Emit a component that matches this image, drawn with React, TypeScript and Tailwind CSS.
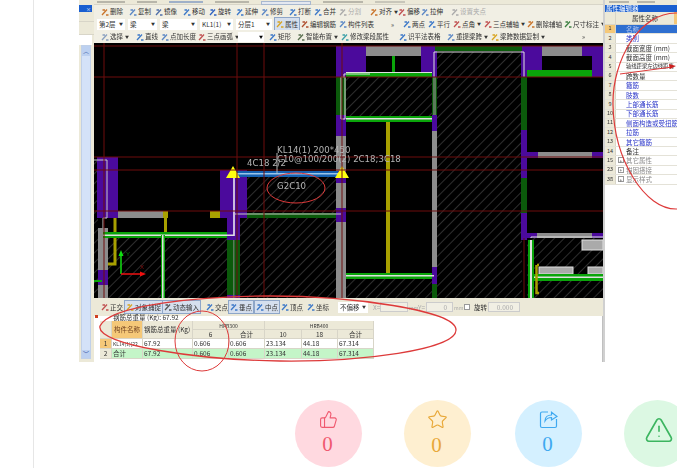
import { Star, ThumbsUp, TriangleAlert } from "lucide-react";

type Tool = { t: string; w: string; c?: string; on?: boolean; off?: boolean; arrow?: boolean };

const row1: Tool[] = [
  { t: "删除", w: "w-[28px]", c: "#c9742b" },
  { t: "复制", w: "w-[26px]", c: "#5b87c5" },
  { t: "镜像", w: "w-[28px]", c: "#4f6fa8" },
  { t: "移动", w: "w-[26px]", c: "#3c78c8" },
  { t: "旋转", w: "w-[27px]", c: "#2f62c0" },
  { t: "延伸", w: "w-[25px]", c: "#3c78c8" },
  { t: "修剪", w: "w-[28px]", c: "#5b87c5" },
  { t: "打断", w: "w-[25px]", c: "#3c78c8" },
  { t: "合并", w: "w-[25px]", c: "#3c78c8" },
  { t: "分割", w: "w-[31px]", c: "#aaaaaa", off: true },
  { t: "对齐", w: "w-[28px]", c: "#c9742b", arrow: true },
  { t: "偏移", w: "w-[23px]", c: "#c05050" },
  { t: "拉伸", w: "w-[30px]", c: "#5b87c5" },
  { t: "设置夹点", w: "w-[40px]", c: "#aaaaaa", off: true },
];

const row2b: Tool[] = [
  { t: "属性", w: "w-[25px]", c: "#d9a520", on: true },
  { t: "编辑钢筋", w: "w-[38px]", c: "#b05030" },
  { t: "构件列表", w: "w-[51px]", c: "#5b87c5" },
];

const row2c: Tool[] = [
  { t: "两点", w: "w-[25px]", c: "#3c78c8" },
  { t: "平行", w: "w-[25px]", c: "#3c78c8" },
  { t: "点角", w: "w-[31px]", c: "#c05050", arrow: true },
  { t: "三点辅轴", w: "w-[43px]", c: "#c05050", arrow: true },
  { t: "删除辅轴", w: "w-[37px]", c: "#c9742b" },
  { t: "尺寸标注", w: "w-[42px]", c: "#3c8040", arrow: true },
];

const row3a: Tool[] = [
  { t: "选择", w: "w-[35px]", c: "#8aa0c0", arrow: true },
  { t: "直线", w: "w-[25px]", c: "#3c78c8" },
  { t: "点加长度", w: "w-[37px]", c: "#5b87c5" },
  { t: "三点画弧", w: "w-[41px]", c: "#c05050", arrow: true },
];

const row3b: Tool[] = [
  { t: "矩形", w: "w-[28px]", c: "#3c78c8" },
  { t: "智能布置", w: "w-[44px]", c: "#5a7050", arrow: true },
  { t: "修改梁段属性", w: "w-[58px]", c: "#3ca0a8" },
  { t: "识平法表格", w: "w-[48px]", c: "#3c78c8" },
  { t: "重提梁跨", w: "w-[44px]", c: "#5b87c5", arrow: true },
  { t: "梁跨数据复制", w: "w-[60px]", c: "#d9a520", arrow: true },
];

const snaps: Tool[] = [
  { t: "正交", w: "w-[25px]", c: "#c05050" },
  { t: "对象捕捉", w: "w-[38px]", c: "#d9a520", on: true },
  { t: "动态输入", w: "w-[42px]", c: "#555555", on: true },
  { t: "交点", w: "w-[24px]", c: "#3c78c8" },
  { t: "垂点", w: "w-[26px]", c: "#3c78c8", on: true },
  { t: "中点", w: "w-[25px]", c: "#3c78c8", on: true },
  { t: "顶点", w: "w-[26px]", c: "#3c78c8" },
  { t: "坐标", w: "w-[32px]", c: "#3c78c8" },
];

const props = [
  { n: "1", t: "名称", k: "sel" },
  { n: "2", t: "类别", k: "blue" },
  { n: "3", t: "截面宽度 (mm)", k: "" },
  { n: "4", t: "截面高度 (mm)", k: "" },
  { n: "5", t: "轴线距梁左边线距离", k: "long" },
  { n: "6", t: "跨数量", k: "" },
  { n: "7", t: "箍筋", k: "blue" },
  { n: "8", t: "肢数", k: "blue" },
  { n: "9", t: "上部通长筋", k: "blue" },
  { n: "10", t: "下部通长筋", k: "blue" },
  { n: "11", t: "侧面构造或受扭筋", k: "blue" },
  { n: "12", t: "拉筋", k: "blue" },
  { n: "13", t: "其它箍筋", k: "blue" },
  { n: "14", t: "备注", k: "" },
  { n: "15", t: "其它属性", k: "plus" },
  { n: "23", t: "锚固搭接", k: "plus" },
  { n: "38", t: "显示样式", k: "plus" },
];

function ToolItem({ tool }: { tool: Tool }) {
  return (
    <div className={`${tool.w} flex items-center shrink-0 h-[12px]`}>
      <div
        className={`flex items-center gap-[1px] h-[12px] px-[1px] ${
          tool.on ? "bg-[#d5dfee] outline outline-[#8ea6c8]" : ""
        }`}
      >
        <svg width="8" height="8" viewBox="0 0 8 8" className="shrink-0">
          <path d="M1 7 L6 1.5 M1.5 2 H4 M5 7 H7.5" stroke={tool.c} strokeWidth="1.3" fill="none" />
        </svg>
        <span className={`whitespace-nowrap ${tool.off ? "text-[#aaa]" : "text-[#333]"}`}>{tool.t}</span>
        {tool.arrow && <span className="text-[4px] text-[#333] ml-[1px]">▼</span>}
      </div>
    </div>
  );
}

function Select({ t, w }: { t: string; w: string }) {
  return (
    <div className={`${w} h-[11px] shrink-0 mr-[3px] bg-white flex items-center justify-between pr-[2px] pl-[2px] text-[#333]`}>
      <span className="whitespace-nowrap">{t}</span>
      <span className="text-[4px]">▼</span>
    </div>
  );
}

function Cell({ t, cls }: { t: string; cls: string }) {
  return (
    <div className={`flex items-center border-r border-b border-[#d8d5c8] px-[1px] overflow-hidden whitespace-nowrap ${cls}`}>
      {t}
    </div>
  );
}

function Canvas() {
  const purple = "#4b0a9c";
  const green = "#0aa50a";
  const dark = "#0b5a0b";
  const gray = "#8c8c8c";
  const olive = "#a8a000";
  const line = "#e0e0e0";
  const red = "#6e0c0c";
  return (
    <svg viewBox="94 43 509 255" className="w-[509px] h-[255px] block bg-black">
      <defs>
        <pattern id="hatch" width="7" height="7" patternUnits="userSpaceOnUse" patternTransform="rotate(45)">
          <rect width="7" height="7" fill="#000" />
          <line x1="0" y1="0" x2="0" y2="7" stroke="#5c5c5c" strokeWidth="1" />
        </pattern>
      </defs>

      {/* hatched slabs */}
      <rect x="346" y="77" width="86" height="40" fill="url(#hatch)" />
      <rect x="437" y="52" width="85" height="246" fill="url(#hatch)" />
      <rect x="247" y="177" width="89" height="40" fill="url(#hatch)" />
      <rect x="240" y="218" width="96" height="80" fill="url(#hatch)" />
      <rect x="108" y="238" width="119" height="60" fill="url(#hatch)" />
      <rect x="94" y="157" width="4" height="141" fill="url(#hatch)" />
      <rect x="346" y="279" width="86" height="19" fill="url(#hatch)" />
      <rect x="527" y="238" width="76" height="60" fill="url(#hatch)" />

      {/* top walls */}
      <rect x="336" y="46" width="30" height="31" fill={purple} />
      <rect x="366" y="46" width="55" height="10" fill={gray} />
      <rect x="421" y="46" width="14" height="31" fill={purple} />
      <rect x="435" y="46" width="87" height="5" fill={dark} />
      <rect x="522" y="46" width="20" height="31" fill={purple} />
      <rect x="542" y="46" width="40" height="10" fill={gray} />
      <rect x="582" y="46" width="21" height="10" fill={purple} />
      <rect x="592" y="56" width="11" height="21" fill={purple} />
      <rect x="527" y="70" width="65" height="7" fill={green} />
      <rect x="392" y="56" width="3" height="16" fill={green} />
      <rect x="346" y="72" width="86" height="5" fill={green} />
      <rect x="346" y="72" width="86" height="1" fill={line} />
      <rect x="346" y="116" width="86" height="6" fill={green} />
      <rect x="346" y="118" width="86" height="1.5" fill={line} />
      <rect x="386" y="122" width="4" height="151" fill={olive} />

      {/* column at 336 */}
      <rect x="336" y="77" width="10" height="38" fill={dark} />
      <rect x="336" y="115" width="10" height="21" fill={purple} />
      <rect x="336" y="136" width="10" height="35" fill={gray} />
      <rect x="336" y="171" width="10" height="12" fill={purple} />
      <rect x="336" y="183" width="10" height="25" fill={gray} />
      <rect x="336" y="208" width="10" height="14" fill={purple} />
      <rect x="336" y="222" width="10" height="76" fill={gray} />
      <path d="M344 77 V74 H370 M341 77 H345 V119 H341 V77" stroke={line} strokeWidth="1" fill="none" />

      {/* column at 432 */}
      <rect x="432" y="51" width="5" height="26" fill={purple} />
      <rect x="432" y="77" width="5" height="38" fill={dark} />
      <rect x="433" y="77" width="3" height="38" fill="#5a7a5a" />
      <rect x="432" y="115" width="5" height="16" fill={purple} />
      <rect x="432" y="131" width="5" height="136" fill={gray} />
      <rect x="432" y="267" width="5" height="17" fill={purple} />
      <rect x="432" y="284" width="5" height="14" fill={dark} />

      {/* right side */}
      <rect x="521" y="51" width="6" height="26" fill={purple} />
      <rect x="521" y="77" width="6" height="53" fill={dark} />
      <rect x="521" y="130" width="6" height="48" fill={purple} />
      <rect x="521" y="178" width="6" height="35" fill={dark} />
      <rect x="521" y="213" width="6" height="27" fill={purple} />
      <rect x="522" y="152" width="81" height="6" fill={purple} />
      <rect x="538" y="152" width="54" height="6" fill={gray} />
      <rect x="527" y="233" width="76" height="5" fill={purple} />
      <rect x="537" y="233" width="55" height="5" fill={gray} />
      <rect x="527" y="130" width="76" height="22" fill="#000" />
      <rect x="582" y="240" width="21" height="10" fill="#aaa" stroke={line} strokeWidth="1" />
      <rect x="539" y="267" width="34" height="7" fill="#aaa" stroke={line} strokeWidth="1" />
      <rect x="588" y="267" width="15" height="7" fill="#aaa" stroke={line} strokeWidth="1" />
      <rect x="532" y="274" width="71" height="7" fill={green} />
      <rect x="531" y="276.5" width="72" height="1.5" fill={line} />
      <rect x="528" y="240" width="6" height="58" fill={green} />
      <rect x="530" y="240" width="2" height="58" fill={line} />
      <path d="M537 265 H539 M536.5 265 V293 H539" stroke={olive} strokeWidth="2.5" fill="none" />
      <path d="M531 238 V237 H603" stroke={line} strokeWidth="1" fill="none" />

      {/* middle white outline */}
      <path d="M434 77 V52 H524 V77" stroke={line} strokeWidth="1" fill="none" />

      {/* lower green runs */}
      <rect x="346" y="273" width="86" height="6" fill={green} />
      <rect x="346" y="275" width="88" height="1.5" fill={line} />

      {/* beam block */}
      <rect x="220" y="170" width="27" height="48" fill={purple} />
      <rect x="227" y="218" width="13" height="22" fill={purple} />
      <rect x="227" y="240" width="13" height="55" fill={dark} />
      <rect x="227" y="295" width="13" height="3" fill={purple} />
      <rect x="233" y="240" width="1.5" height="58" fill="#5a7a5a" />
      <rect x="233" y="170" width="2" height="66" fill="#cbb8e0" />
      <rect x="247" y="213" width="89" height="5" fill={dark} />
      <rect x="235" y="213.5" width="106" height="1" fill="#c8c8c8" />
      <rect x="210" y="211" width="10" height="7" fill={olive} />
      <rect x="236" y="171" width="102" height="6" fill="#1460b0" />
      <rect x="236" y="173" width="102" height="1.5" fill="#9cc4e8" />
      <path d="M233 166 L240 178 H226 Z M342 166 L349 178 H335 Z" fill="#ffff10" />

      {/* left block */}
      <rect x="97" y="157" width="21" height="61" fill={purple} />
      <rect x="118" y="211" width="46" height="7" fill={gray} />
      <rect x="163" y="211" width="5" height="7" fill={olive} />
      <rect x="164" y="218" width="3" height="14" fill={olive} />
      <path d="M115 218 V264 H108" stroke={olive} strokeWidth="3" fill="none" />
      <rect x="98" y="228" width="10" height="42" fill={gray} />
      <rect x="98" y="270" width="10" height="15" fill={purple} />
      <rect x="98" y="285" width="10" height="13" fill={gray} />
      <path d="M94 160 H107 V218 H103 V228" stroke="#c8c8c8" strokeWidth="1" fill="none" />
      <path d="M94 281 H102" stroke={green} strokeWidth="2" fill="none" />
      <rect x="103" y="232" width="124" height="6" fill={green} />
      <rect x="103" y="234.5" width="131" height="1.5" fill={line} />
      <rect x="161" y="235" width="4" height="63" fill={green} />
      <rect x="162" y="235" width="1.5" height="63" fill={line} />

      {/* axis marker */}
      <path d="M121 274 V254" stroke="#10e010" strokeWidth="1.5" fill="none" />
      <path d="M121 250 L123.5 256 H118.5 Z" fill="#10e010" />
      <path d="M121 274 H141" stroke="#f01010" strokeWidth="1.5" fill="none" />
      <path d="M146 274 L140 271.5 V276.5 Z" fill="#f01010" />
      <text x="126" y="256" fontSize="6" fill="#0a7a0a" fontFamily="'Liberation Sans', sans-serif">Y</text>
      <text x="140" y="269" fontSize="6" fill="#8a1010" fontFamily="'Liberation Sans', sans-serif">X</text>

      {/* grid lines */}
      <g stroke={red} strokeWidth="1">
        <path d="M94 46 H603 M94 77 H603 M94 157 H603 M94 170 H603 M94 211 H603" />
        <path d="M104 43 V298 M237 43 V298 M264 43 V298 M342 43 V298 M524 238 V298" />
      </g>

      {/* beam labels */}
      <g fill="#b4b4b4" fontSize="8.6" fontFamily="'DejaVu Sans', sans-serif">
        <text x="277" y="153">KL14(1) 200*450</text>
        <text x="277" y="162">C10@100/200(2) 2C18;3C18</text>
        <text x="247" y="166">4C18 2/2</text>
        <text x="277" y="189">G2C10</text>
      </g>
      <path d="M277 153 V173" stroke="#b4b4b4" strokeWidth="1" fill="none" />
    </svg>
  );
}

export default function App() {
  return (
    <div className="relative w-[677px] h-[468px] overflow-hidden bg-white font-['Noto_Sans_CJK_SC','Liberation_Sans',sans-serif]">
      <div className="ml-[33px] h-[468px] border-l border-[#e6e6e6] pl-[45px]">
        {/* screenshot in the post */}
        <div className="relative w-[598px] h-[362px] flex text-[6.5px] leading-none blur-[0.6px]">
          {/* left dock */}
          <div className="w-[15px] shrink-0 flex flex-col bg-[#ece9d8]">
            <div className="h-[5px]" />
            <div className="h-[7px] mr-[2px] bg-[#1a5fd0] text-white flex items-center justify-end pr-[1px] text-[5px]">×</div>
            <div className="h-[10px] border-b border-[#d8d5c8]" />
            <div className="h-[13px] border-b border-[#d8d5c8]" />
            <div className="h-[10px] bg-white mr-[2px]" />
            <div className="flex-1 flex flex-col justify-between ml-[2px] w-[10px] bg-[#d4e2f8] border border-[#c0d0e8] mb-[3px]">
              <div className="h-[10px] flex items-center justify-center bg-[#bcd0f0] text-[#3050a0] text-[6px]">︿</div>
              <div className="h-[8px] flex items-center justify-center bg-[#bcd0f0] text-[#3050a0] text-[6px]">﹀</div>
            </div>
          </div>

          {/* main column */}
          <div className="w-[509px] shrink-0 flex flex-col bg-[#ece9d8]">
            <div className="h-[5px] bg-[#ece9d8] border-b border-[#d8d5c8] flex items-start pt-[1px] pl-[3px] gap-[12px]">
              <div className="w-[28px] h-[2px] bg-[#b8b6aa]" />
              <div className="w-[20px] h-[2px] bg-[#b8b6aa]" />
              <div className="w-[34px] h-[2px] bg-[#9fb0c8]" />
              <div className="w-[34px] h-[2px] bg-[#b8b6aa]" />
              <div className="w-[50px] h-[4px] bg-[#e4e8f0] border border-[#a8b8d0]" />
              <div className="w-[40px] h-[2px] bg-[#b8b6aa]" />
              <div className="w-[30px] h-[2px] bg-[#c8c6ba]" />
            </div>
            <div className="h-[13px] bg-[#f1efe4] flex items-center pl-[6px]">
              {row1.map((tool) => (
                <ToolItem key={tool.t} tool={tool} />
              ))}
            </div>
            <div className="h-[12px] bg-[#f1efe4] flex items-center pl-[3px]">
              <Select t="第2层" w="w-[28px]" />
              <Select t="梁" w="w-[29px]" />
              <Select t="梁" w="w-[37px]" />
              <Select t="KL1(1)" w="w-[33px]" />
              <Select t="分层1" w="w-[36px]" />
              {row2b.map((tool) => (
                <ToolItem key={tool.t} tool={tool} />
              ))}
              <span className="w-[13px] shrink-0 text-[#333] pl-[2px]">»</span>
              {row2c.map((tool) => (
                <ToolItem key={tool.t} tool={tool} />
              ))}
            </div>
            <div className="h-[13px] bg-[#f1efe4] flex items-center pl-[6px]">
              {row3a.map((tool) => (
                <ToolItem key={tool.t} tool={tool} />
              ))}
              <div className="w-[26px] h-[10px] mr-[4px] shrink-0 bg-white flex justify-end items-center pr-[1px] text-[4px]">▼</div>
              {row3b.map((tool) => (
                <ToolItem key={tool.t} tool={tool} />
              ))}
              <span className="text-[#333] ml-[32px]">»</span>
            </div>

            <Canvas />

            {/* snap toolbar */}
            <div className="h-[18px] bg-[#ece9d8] flex items-center pl-[6px]">
              {snaps.map((tool) => (
                <ToolItem key={tool.t} tool={tool} />
              ))}
              <Select t="不偏移" w="w-[30px]" />
              <span className="ml-[2px] w-[7px] text-[#aaa]">X=</span>
              <div className="w-[28px] h-[10px] border border-[#ccc] bg-[#f1efe4]" />
              <span className="ml-[1px] w-[9px] text-[#aaa] text-[5px]">mm</span>
              <span className="w-[8px] text-[#aaa]">Y=</span>
              <div className="w-[27px] h-[10px] border border-[#ccc] bg-[#f1efe4] flex items-center justify-end pr-[5px] text-[#aaa]">0</div>
              <span className="ml-[1px] w-[10px] text-[#aaa] text-[5px]">mm</span>
              <div className="w-[6px] h-[6px] border border-[#999] bg-white mr-[4px]" />
              <span className="w-[14px] text-[#333]">旋转</span>
              <div className="w-[32px] h-[10px] border border-[#ccc] bg-[#f1efe4] flex items-center justify-end pr-[6px] text-[#aaa]">0.000</div>
            </div>

            {/* rebar table */}
            <div className="h-[46px] bg-white border-r border-[#c0c0c0] relative">
              <span className="absolute left-[1px] top-[-1px] w-[3px] h-[3px] bg-[#d04020]" />
              <div className="h-[5px] flex items-center pl-[19px] pb-[2px] text-[#333]">
                <span className="whitespace-nowrap">钢筋总重量 (Kg): 67.92</span>
              </div>
              <div className="ml-[6px] w-[274px] grid grid-cols-[12px_31px_50px_36px_36px_37px_36px_36px] grid-rows-[9px_9px_10px_10px] text-[#333]">
                <Cell t="" cls="row-span-2 bg-[#ece9d8]" />
                <Cell t="构件名称" cls="row-span-2 bg-[#f5c878] justify-center text-[#704020]" />
                <Cell t="钢筋总重量 (Kg)" cls="row-span-2 bg-[#ece9d8]" />
                <Cell t="HPB300" cls="col-span-2 bg-[#ece9d8] justify-center text-[5px]" />
                <Cell t="HRB400" cls="col-span-3 bg-[#ece9d8] justify-center text-[5px]" />
                <Cell t="6" cls="bg-[#ece9d8] justify-center" />
                <Cell t="合计" cls="bg-[#ece9d8] justify-center" />
                <Cell t="10" cls="bg-[#ece9d8] justify-center" />
                <Cell t="18" cls="bg-[#ece9d8] justify-center" />
                <Cell t="合计" cls="bg-[#ece9d8] justify-center" />
                <Cell t="1" cls="bg-[#f5c878] justify-center" />
                <Cell t="KL14(1)[22" cls="text-[5px]" />
                <Cell t="67.92" cls="" />
                <Cell t="0.606" cls="" />
                <Cell t="0.606" cls="" />
                <Cell t="23.134" cls="" />
                <Cell t="44.18" cls="" />
                <Cell t="67.314" cls="" />
                <Cell t="2" cls="bg-[#ece9d8] justify-center" />
                <Cell t="合计" cls="bg-[#c4f5c8]" />
                <Cell t="67.92" cls="bg-[#c4f5c8]" />
                <Cell t="0.606" cls="bg-[#c4f5c8]" />
                <Cell t="0.606" cls="bg-[#c4f5c8]" />
                <Cell t="23.134" cls="bg-[#c4f5c8]" />
                <Cell t="44.18" cls="bg-[#c4f5c8]" />
                <Cell t="67.314" cls="bg-[#c4f5c8]" />
              </div>
            </div>
          </div>

          {/* property panel */}
          <div className="w-[74px] shrink-0 flex flex-col bg-white border-l-2 border-[#d0d0d0]">
            <div className="h-[5px] bg-[#ece9d8] flex items-start pt-[1px] pl-[4px] gap-[8px]">
              <div className="w-[20px] h-[2px] bg-[#b8b6aa]" />
              <div className="w-[18px] h-[2px] bg-[#b8b6aa]" />
            </div>
            <div className="h-[7px] bg-[#1a5fd0] text-white flex items-center whitespace-nowrap pl-[1px]">属性编辑器</div>
            <div className="h-[13px] flex border-b border-[#d8d5c8] bg-[#ece9d8]">
              <div className="w-[11px] border-r border-[#d8d5c8]" />
              <div className="flex-1 flex items-center justify-center text-[#333]">属性名称</div>
              <div className="w-[3px] bg-[#f5c878]" />
            </div>
            {props.map((p) => (
              <div key={p.n} className="h-[9.4px] flex border-b border-[#e4e2d8]">
                <div
                  className={`w-[11px] shrink-0 flex items-center justify-center border-r border-[#d8d5c8] text-[5.5px] ${
                    p.k === "sel" ? "bg-[#f5c878]" : "bg-[#ece9d8]"
                  } text-[#333]`}
                >
                  {p.n}
                </div>
                {p.k === "plus" && (
                  <div className="w-[6px] h-[6px] shrink-0 mt-[1px] ml-[2px] border border-[#999] text-[5px] flex items-center justify-center text-[#333]">+</div>
                )}
                <div
                  className={`flex-1 flex items-center whitespace-nowrap overflow-hidden ${p.k === "plus" ? "pl-[2px]" : "pl-[10px]"} ${
                    p.k === "sel"
                      ? "bg-[#2f6fd0] text-[#b8c8f0]"
                      : p.k === "blue"
                        ? "text-[#2a35c8]"
                        : p.k === "plus"
                          ? "text-[#8a8a8a]"
                          : p.k === "long"
                            ? "text-[#333] text-[5.3px]"
                            : "text-[#333]"
                  }`}
                >
                  {p.t}
                </div>
              </div>
            ))}
          </div>
        </div>

        {/* action buttons */}
        <div className="flex mt-[38px] ml-[216px] w-[500px]">
          <div className="w-[67px] h-[67px] shrink-0 rounded-full bg-[#ffd9e0] flex flex-col items-center pt-[10px] text-[#f05a70]">
            <ThumbsUp size={19} strokeWidth={1.4} />
            <span className="font-['Liberation_Serif',serif] text-[21px] leading-[26px] mt-[2px] -ml-[2px]">0</span>
          </div>
          <div className="w-[67px] h-[67px] shrink-0 ml-[42px] rounded-full bg-[#feefd0] flex flex-col items-center pt-[9px] text-[#e8a838]">
            <Star size={21} strokeWidth={1.3} />
            <span className="font-['Liberation_Serif',serif] text-[21px] leading-[26px] mt-[2px] -ml-[2px]">0</span>
          </div>
          <div className="w-[67px] h-[67px] shrink-0 ml-[44px] rounded-full bg-[#d4f0ff] flex flex-col items-center pt-[10px] text-[#3fa9f0]">
            <svg width="19" height="19" viewBox="0 0 19 19" fill="none" stroke="currentColor" strokeWidth="1.2">
              <path d="M9 2 H3 a1.5 1.5 0 0 0 -1.5 1.5 V16 a1.5 1.5 0 0 0 1.5 1.5 H16 a1.5 1.5 0 0 0 1.5 -1.5 V9" />
              <path d="M6 11 C6 7 9 5 12.5 5 V2.2 L18 6.5 L12.5 10 V7.5 C10 7.5 7.5 8.5 6 11 Z" />
            </svg>
            <span className="font-['Liberation_Serif',serif] text-[21px] leading-[26px] mt-[2px] -ml-[2px]">0</span>
          </div>
          <div className="w-[67px] h-[67px] shrink-0 ml-[42px] rounded-full bg-[#dcf8e3] flex items-center justify-center text-[#3cb560] pl-[3px] pb-[7px]">
            <TriangleAlert size={30} strokeWidth={1.3} />
          </div>
        </div>
      </div>

      {/* red markup drawn over the screenshot */}
      <svg viewBox="0 0 677 468" className="absolute inset-0 w-[677px] h-[468px] pointer-events-none blur-[0.3px]">
        <g fill="none" stroke="#dd3a3a" strokeWidth="1">
          <ellipse cx="296" cy="188" rx="29" ry="15" />
          <path d="M100 326 C110 305 200 296 270 296 C350 296 456 310 456 330 C456 350 360 362 280 361 C200 360 95 345 100 326 Z" strokeWidth="1.3" />
          <ellipse cx="202" cy="341" rx="27" ry="30" />
          <path d="M677 13 C640 12 612 60 613 105 C614 160 645 210 677 209" strokeWidth="1.2" />
          <path d="M620 74 L672 67" />
        </g>
        <path d="M676 66 L669 64 L670 69 Z" fill="#cc1f1f" />
      </svg>
    </div>
  );
}
